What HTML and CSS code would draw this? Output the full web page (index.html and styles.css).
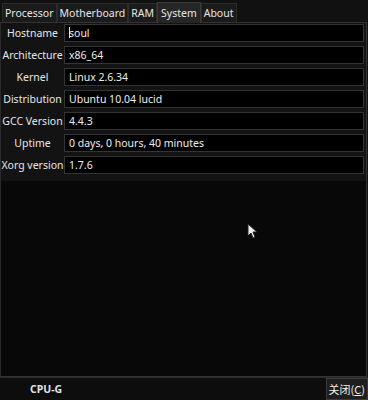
FILE: index.html
```html
<!DOCTYPE html>
<html lang="en">
    <head>
        <meta charset="UTF-8" />
        <title>CPU-G</title>
        <link rel="stylesheet" href="styles.css" />
    </head>
    <body>
        <div class="window">
            <div class="tabs">
                <div class="tab">Processor</div>
                <div class="tab">Motherboard</div>
                <div class="tab">RAM</div>
                <div class="tab active">System</div>
                <div class="tab">About</div>
            </div>
            <div class="panel">
                <div class="rows">
                    <div class="row"><span class="label">Hostname</span><span class="field"><span class="caret"></span>soul</span></div>
                    <div class="row"><span class="label">Architecture</span><span class="field">x86_64</span></div>
                    <div class="row"><span class="label">Kernel</span><span class="field">Linux 2.6.34</span></div>
                    <div class="row"><span class="label">Distribution</span><span class="field">Ubuntu 10.04 lucid</span></div>
                    <div class="row"><span class="label">GCC Version</span><span class="field">4.4.3</span></div>
                    <div class="row"><span class="label">Uptime</span><span class="field">0 days, 0 hours, 40 minutes</span></div>
                    <div class="row"><span class="label">Xorg version</span><span class="field">1.7.6</span></div>
                </div>
                <div class="empty">
                    <svg class="pointer" width="10" height="16" viewBox="0 0 10 16">
                        <path d="M1 1 L1 13 L4 10 L6 15 L8 14 L6 9 L10 9 Z" fill="#f2f2f2" stroke="#222" stroke-width="1" />
                    </svg>
                </div>
            </div>
            <div class="footer">
                <span class="brand">CPU-G</span>
                <button class="close">关闭(<u>C</u>)</button>
            </div>
        </div>
    </body>
</html>
```

FILE: styles.css
```css
body {
    margin: 0;
    background: #0b0b0b;
    font-family: "Noto Sans", "Noto Sans CJK SC", sans-serif;
    font-size: 10.5px;
    color: #e6e6e6;
}

.window {
    width: 368px;
    height: 400px;
    display: flex;
    flex-direction: column;
    background: #111;
}

.tabs {
    display: flex;
    padding: 2px 0 0 2px;
    height: 20px;
    align-items: flex-end;
}

.tab {
    height: 19px;
    line-height: 18px;
    padding: 0 2px;
    background: #1b1b1b;
    border: 1px solid #2c2c2c;
    border-bottom: none;
    box-sizing: border-box;
}

.tab.active {
    height: 21px;
    line-height: 20px;
    padding: 0 3px;
    background: #262626;
    border-color: #3a3a3a;
    margin-bottom: -1px;
    position: relative;
}

.panel {
    flex: 1;
    display: flex;
    flex-direction: column;
    border: 1px solid #333;
    border-left-color: #2a2a2a;
    margin-right: 1px;
    background: #070707;
}

.rows {
    display: flex;
    flex-direction: column;
    gap: 4px;
    padding: 1px 2px 7px 0;
    background: #131313;
}

.row {
    display: flex;
    height: 18px;
}

.label {
    width: 63px;
    text-align: center;
    line-height: 18px;
    white-space: nowrap;
    flex: none;
}

.field {
    flex: 1;
    background: #000;
    border: 1px solid #343434;
    line-height: 16px;
    padding-left: 4px;
    color: #eee;
}

.caret {
    display: inline-block;
    width: 1px;
    height: 11px;
    background: #ddd;
    vertical-align: -1px;
    margin-right: -1px;
}

.empty {
    flex: 1;
    position: relative;
    background: #080808;
}

.pointer {
    position: absolute;
    left: 246px;
    top: 42px;
}

.footer {
    height: 22px;
    display: flex;
    align-items: center;
    justify-content: space-between;
    background: #0d0d0d;
    border-top: 1px solid #2b2b2b;
}

.brand {
    margin-left: 30px;
    font-weight: bold;
    color: #dfe4ea;
}

.close {
    height: 22px;
    font-family: "Noto Sans CJK SC", sans-serif;
    font-size: 11px;
    color: #eee;
    background: #1e1e1e;
    border: 1px solid #3a3a3a;
    padding: 0 2px;
}
```
